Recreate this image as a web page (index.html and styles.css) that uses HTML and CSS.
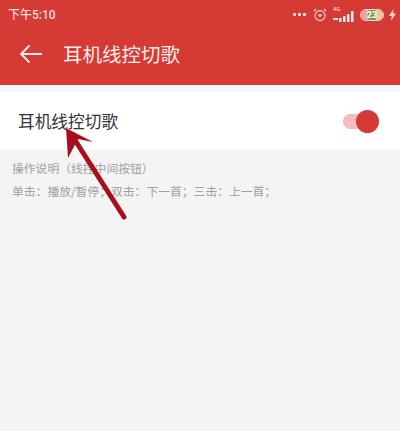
FILE: index.html
```html
<!DOCTYPE html>
<html lang="zh-CN">
<head>
<meta charset="utf-8">
<title>耳机线控切歌</title>
<link rel="stylesheet" href="styles.css">
</head>
<body>
<div class="screen">
  <header class="appbar">
    <div class="status">
      <span class="time">下午5:10</span>
      <div class="status-icons">
        <span class="dots"><i></i><i></i><i></i></span>
        <svg class="alarm" width="14" height="14" viewBox="0 0 14 14" fill="none" stroke="#f6d9d5" stroke-width="1.1"><circle cx="7" cy="7.6" r="5"/><path d="M1 3 3 1M13 3 11 1"/><path d="M5.3 6.6c.7-.8 1.4-.4 1.7.2.3-.6 1-1 1.7-.2.5.8-.8 2-1.700 2.600-.9-.6-2.200-1.800-1.700-2.600Z" fill="#f6d9d5" stroke="none"/></svg>
        <span class="net">
          <span class="net-label">4G</span>
          <svg width="21" height="11" viewBox="0 0 21 11" fill="#f8e6e3"><rect x="0" y="7" width="5" height="2"/><rect x="6" y="7" width="2.500" height="4"/><rect x="10" y="5" width="2.500" height="6"/><rect x="14" y="3" width="2.500" height="8"/><rect x="18" y="0" width="2.500" height="11"/></svg>
        </span>
        <span class="battery"><span class="battery-fill"></span><span class="battery-num">23</span></span>
        <svg width="7" height="12" viewBox="0 0 7 12" fill="#f6d9d5"><path d="M4.500 0 0 7h2.800L2 12l5-7.400H4Z"/></svg>
      </div>
    </div>
    <div class="toolbar">
      <svg class="back" width="24" height="20" viewBox="0 0 24 20" fill="none" stroke="#fbeeea" stroke-width="1.800"><path d="M23 10H2M10.500 1.500 2 10l8.500 8.500"/></svg>
      <h1 class="title">耳机线控切歌</h1>
    </div>
  </header>
  <div class="gap"></div>
  <section class="row">
    <span class="row-label">耳机线控切歌</span>
    <span class="switch"><span class="knob"></span></span>
  </section>
  <section class="notes">
    <p class="note">操作说明（线控中间按钮）</p>
    <p class="note">单击：播放/暂停；双击：下一首；三击：上一首；</p>
  </section>
  <svg class="arrow" width="400" height="431" viewBox="0 0 400 431"><line class="arrow-line" x1="124" y1="217" x2="73" y2="137"/><path class="arrow-head" d="M66 128 93 142 78 139 68 158Z"/></svg>
</div>
</body>
</html>
```

FILE: styles.css
```css
* { box-sizing: border-box; }
html, body { margin: 0; padding: 0; }
body { width: 400px; height: 431px; overflow: hidden; background: #f4f4f4; font-family: "Noto Sans CJK SC", "Liberation Sans", sans-serif; }
.screen { position: relative; width: 400px; height: 431px; display: flex; flex-direction: column; }
.appbar { height: 85px; background: #d63a35; color: #fbeeea; display: flex; flex-direction: column; flex: none; }
.status { height: 27px; padding: 2px 4px 0 8px; display: flex; align-items: center; justify-content: space-between; }
.time { font-size: 12px; line-height: 16px; font-weight: 500; font-family: "Roboto", "Noto Sans CJK SC", sans-serif; color: #f6dcd8; }
.status-icons { display: flex; align-items: center; gap: 6px; }
.dots { display: flex; gap: 2px; margin-right: 1px; }
.dots i { width: 3px; height: 3px; background: #f6d9d5; display: block; }
.net { position: relative; display: block; width: 21px; height: 15px; padding-top: 4px; }
.net svg { display: block; }
.net-label { position: absolute; left: 0; top: -2px; font-size: 6px; line-height: 7px; font-family: "Roboto", sans-serif; color: #f8e6e3; }
.battery { position: relative; width: 24px; height: 12px; border: 1px solid #f6d9d5; border-radius: 6px; display: flex; align-items: center; justify-content: center; margin-right: -1px; overflow: hidden; }
.battery-fill { position: absolute; left: 0; top: 0; bottom: 0; width: 100%; background: linear-gradient(90deg, #e9a59c 0 30%, #7f9a55 30% 70%, #e9c9a0 70%); }
.battery-num { position: relative; font-size: 9px; line-height: 10px; font-family: "Roboto", sans-serif; font-weight: 700; color: #fff; }
.toolbar { flex: 1; display: flex; align-items: center; padding: 0 0 4px 19px; gap: 20px; }
.back { flex: none; }
.title { margin: 0; font-size: 19.5px; line-height: 26px; font-weight: 400; color: #fbeeea; }
.gap { height: 7px; background: #f1f7fa; flex: none; }
.row { height: 58px; background: #fff; padding: 0 18px; display: flex; align-items: center; justify-content: space-between; flex: none; }
.row-label { font-size: 16.7px; line-height: 24px; color: #333; }
.switch { position: relative; width: 32px; height: 15px; border-radius: 8px; background: #f3bdb8; margin-right: 7px; }
.knob { position: absolute; right: -4px; top: -4px; width: 23px; height: 23px; background: #d63a35; border-radius: 50%; }
.notes { flex: 1; padding: 9px 12px; }
.note { margin: 0 0 6px; font-size: 11.8px; line-height: 17px; color: #a0a0a0; }
.arrow { position: absolute; left: 0; top: 0; }
.arrow-line { stroke: #a80f1c; stroke-width: 5px; stroke-linecap: round; }
.arrow-head { fill: #a80f1c; }
```
